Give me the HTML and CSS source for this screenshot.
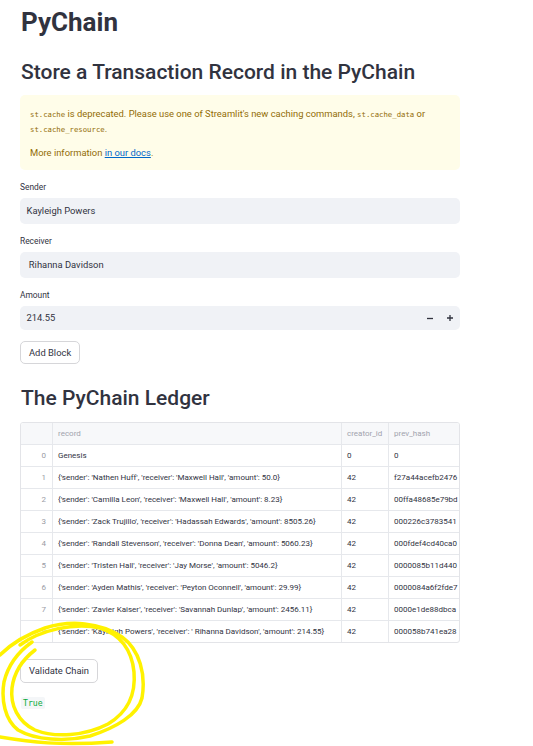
FILE: index.html
```html
<!DOCTYPE html>
<html lang="en">
<head>
<meta charset="utf-8">
<title>PyChain</title>
<link rel="stylesheet" href="styles.css">
</head>
<body>
<main class="app">
  <h1 class="title">PyChain</h1>
  <h2 class="heading store">Store a Transaction Record in the PyChain</h2>
  <div class="alert">
    <p><code>st.cache</code> is deprecated. Please use one of Streamlit's new caching commands, <code>st.cache_data</code> or<br><code>st.cache_resource</code>.</p>
    <p>More information <a href="#">in our docs</a>.</p>
  </div>
  <div class="field">
    <label class="label">Sender</label>
    <div class="input">Kayleigh Powers</div>
  </div>
  <div class="field">
    <label class="label">Receiver</label>
    <div class="input">&nbsp;Rihanna Davidson</div>
  </div>
  <div class="field">
    <label class="label">Amount</label>
    <div class="input number">
      <span class="value">214.55</span>
      <span class="step"><svg width="6" height="6" viewBox="0 0 6 6"><path d="M0 3.5H6" stroke="#31333f" stroke-width="1.3"/></svg></span>
      <span class="step"><svg width="6" height="6" viewBox="0 0 6 6"><path d="M0 3H6M3 0V6" stroke="#31333f" stroke-width="1.3"/></svg></span>
    </div>
  </div>
  <button class="btn add">Add Block</button>
  <h2 class="heading ledger">The PyChain Ledger</h2>
  <div class="table-wrap">
    <table class="grid">
      <colgroup><col class="c-idx"><col class="c-rec"><col class="c-cre"><col class="c-hash"></colgroup>
      <thead>
        <tr><th class="idx"></th><th>record</th><th>creator_id</th><th class="last">prev_hash</th></tr>
      </thead>
      <tbody>
        <tr><td class="idx">0</td><td>Genesis</td><td>0</td><td class="last">0</td></tr>
        <tr><td class="idx">1</td><td>{'sender': 'Nathen Huff', 'receiver': 'Maxwell Hall', 'amount': 50.0}</td><td>42</td><td class="last">f27a44acefb2476</td></tr>
        <tr><td class="idx">2</td><td>{'sender': 'Camilla Leon', 'receiver': 'Maxwell Hall', 'amount': 8.23}</td><td>42</td><td class="last">00ffa48685e79bd</td></tr>
        <tr><td class="idx">3</td><td>{'sender': 'Zack Trujillo', 'receiver': 'Hadassah Edwards', 'amount': 8505.26}</td><td>42</td><td class="last">000226c3783541</td></tr>
        <tr><td class="idx">4</td><td>{'sender': 'Randall Stevenson', 'receiver': 'Donna Dean', 'amount': 5060.23}</td><td>42</td><td class="last">000fdef4cd40ca0</td></tr>
        <tr><td class="idx">5</td><td>{'sender': 'Tristen Hall', 'receiver': 'Jay Morse', 'amount': 5046.2}</td><td>42</td><td class="last">0000085b11d440</td></tr>
        <tr><td class="idx">6</td><td>{'sender': 'Ayden Mathis', 'receiver': 'Peyton Oconnell', 'amount': 29.99}</td><td>42</td><td class="last">0000084a6f2fde7</td></tr>
        <tr><td class="idx">7</td><td>{'sender': 'Zavier Kaiser', 'receiver': 'Savannah Dunlap', 'amount': 2456.11}</td><td>42</td><td class="last">0000e1de88dbca</td></tr>
        <tr><td class="idx">8</td><td>{'sender': 'Kayleigh Powers', 'receiver': ' Rihanna Davidson', 'amount': 214.55}</td><td>42</td><td class="last">000058b741ea28</td></tr>
      </tbody>
    </table>
  </div>
  <button class="btn validate">Validate Chain</button>
  <div class="result"><code class="true">True</code></div>
</main>
<svg class="scribble" width="533" height="746" viewBox="0 0 533 746" aria-hidden="true">
  <g fill="none" stroke="#fff200" stroke-width="3.5" stroke-linecap="round" stroke-linejoin="round">
    <path d="M0 655 C10 645 25 635 45 628 C70 620 100 622 122 637 C140 650 146 675 142 698 C138 715 115 728 90 736 C65 742 35 740 18 730 C5 720 1 700 4 682 C8 665 18 652 32 642"/>
    <path d="M20 645 C40 630 75 622 100 628 C120 634 132 650 134 672 C136 695 128 712 108 724 C85 736 55 738 35 730 C18 722 10 705 12 688 C14 672 22 660 35 650"/>
    <path d="M0 737 C30 742 60 746 112 742"/>
  </g>
</svg>
</body>
</html>
```
FILE: styles.css
```css
* { box-sizing: border-box; }

html, body {
  margin: 0;
  padding: 0;
  background: #ffffff;
}

body {
  position: relative;
  width: 533px;
  height: 746px;
  overflow: hidden;
  font-family: Roboto, "Noto Sans", "Liberation Sans", sans-serif;
  color: #31333f;
}

.app {
  width: 440px;
  margin-left: 20px;
  padding-top: 5px;
}

.title {
  margin: 0 0 0 1px;
  font-size: 26px;
  line-height: 34px;
  font-weight: 700;
  color: #31333f;
}

.heading {
  margin: 0 0 0 1px;
  font-size: 21px;
  line-height: 28px;
  font-weight: 500;
  color: #31333f;
}

.heading.store { margin-top: 19px; }
.heading.ledger { margin-top: 20px; }

.alert {
  margin-top: 9px;
  padding: 10.5px 10px 10px 10px;
  background: #fffde9;
  border-radius: 5px;
  color: #926c05;
  font-size: 9.4px;
}

.alert p {
  margin: 0;
  line-height: 15px;
}

.alert p + p { margin-top: 9px; }

.alert code {
  font-family: "DejaVu Sans Mono", "Liberation Mono", monospace;
  font-size: 7.3px;
  line-height: 1;
  color: #926c05;
}

.alert a {
  color: #0068c9;
  text-decoration: underline;
}

.field { margin-top: 11.5px; }

.label {
  display: block;
  font-size: 8.4px;
  line-height: 12px;
  margin-bottom: 4.5px;
  color: #31333f;
}

.input {
  display: flex;
  align-items: center;
  height: 26px;
  padding: 0 6.5px;
  background: #f0f2f6;
  border-radius: 5px;
  font-size: 9.4px;
  color: #31333f;
  white-space: pre;
}

.input.number {
  height: 24.5px;
  padding-right: 0;
}

.input.number .value { flex: 1; }

.step {
  width: 20px;
  height: 100%;
  display: flex;
  align-items: center;
  justify-content: center;
}

.btn {
  display: block;
  height: 23.5px;
  padding: 0 8px;
  background: #ffffff;
  border: 1px solid #d6d6d9;
  border-radius: 5px;
  font-family: inherit;
  font-size: 9.4px;
  color: #31333f;
}

.btn.add { margin-top: 10.5px; }
.btn.validate { margin-top: 16px; height: 24px; }

.table-wrap {
  margin-top: 9.5px;
  width: 440px;
  border: 1px solid #e3e4e8;
  border-radius: 3px;
  overflow: hidden;
}

.grid {
  width: 438px;
  table-layout: fixed;
  border-collapse: separate;
  border-spacing: 0;
  font-size: 8px;
}

.c-idx { width: 32px; }
.c-rec { width: 289px; }
.c-cre { width: 47px; }
.c-hash { width: 70px; }

.grid th,
.grid td {
  padding: 0 5px;
  line-height: 21px;
  border-right: 1px solid #e6e8ec;
  border-bottom: 1px solid #e6e8ec;
  white-space: nowrap;
  overflow: hidden;
  text-overflow: clip;
  text-align: left;
  font-weight: 400;
  color: #31333f;
}

.grid th {
  background: #f7f8fa;
  color: #a1a3ad;
}

.grid td.idx,
.grid th.idx {
  text-align: right;
  padding-right: 6px;
  color: #9a9ca5;
}

.grid .last { border-right: none; }

.grid tbody tr:last-child td { border-bottom: none; }

.result {
  margin-top: 12px;
  line-height: 12px;
}

.true {
  font-family: "DejaVu Sans Mono", "Liberation Mono", monospace;
  font-size: 8.2px;
  line-height: 1;
  color: #09ab3b;
  background: #f4f6f8;
  padding: 1px 2px;
  border-radius: 2px;
  margin-left: 1px;
}

.scribble {
  position: absolute;
  left: 0;
  top: 0;
  pointer-events: none;
}
```
